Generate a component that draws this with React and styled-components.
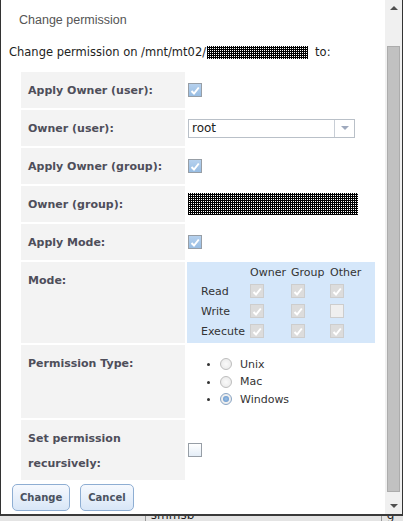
import React from 'react';
import styled, { createGlobalStyle } from 'styled-components';

const Global = createGlobalStyle`
  html, body {
    margin: 0;
    padding: 0;
    background: #e2e2e2;
  }
`;

const Screen = styled.div`
  width: 403px;
  height: 521px;
  display: flex;
  flex-direction: column;
  overflow: hidden;
`;

const Window = styled.div`
  height: 514px;
  flex-shrink: 0;
  display: flex;
  background: #fff;
  border-left: 1px solid #333;
  border-right: 1px solid #333;
  border-bottom: 2px solid #3a3a3a;
`;

const Content = styled.div`
  flex: 1;
  display: flex;
  flex-direction: column;
  padding-left: 8px;
`;

const Title = styled.div`
  font-family: 'Liberation Sans', Arial, sans-serif;
  font-size: 12.5px;
  color: #555;
  line-height: 14px;
  padding: 13px 0 0 10px;
`;

const Intro = styled.div`
  font-family: 'DejaVu Sans', Verdana, sans-serif;
  font-size: 11.5px;
  color: #222;
  line-height: 16px;
  margin-top: 17px;
  display: flex;
  align-items: center;
`;

const Redacted = styled.span`
  display: inline-block;
  width: ${(p) => p.w}px;
  height: ${(p) => p.h}px;
  background-color: #000;
  background-image: conic-gradient(#fff 0 25%, #000 0 100%);
  background-size: 2px 2px;
  margin: ${(p) => p.m || '0'};
`;

const Form = styled.div`
  display: grid;
  grid-template-columns: 164px 188px;
  gap: 2px;
  margin: 12px 0 0 12px;
`;

const Label = styled.div`
  background: #f3f3f3;
  font-family: 'DejaVu Sans', Verdana, sans-serif;
  font-weight: bold;
  font-size: 11px;
  color: #4e4e5a;
  line-height: 25px;
  padding: 6px 7px 4px;
`;

const Value = styled.div`
  display: flex;
  align-items: center;
  min-height: 36px;
  background: ${(p) => (p.blue ? '#d5e7fa' : 'transparent')};
`;

const Box = styled.span`
  width: 14px;
  height: 14px;
  box-sizing: border-box;
  display: inline-flex;
  align-items: center;
  justify-content: center;
  margin-left: ${(p) => (p.inset ? '1px' : '0')};
  border: 1px solid ${(p) => (p.disabled ? '#cdcdcd' : '#979ea6')};
  background: ${(p) =>
    p.disabled
      ? p.checked
        ? '#dcdcdc'
        : '#efefef'
      : p.checked
      ? 'linear-gradient(#b6d1ee, #98bde3)'
      : 'linear-gradient(#ffffff, #e4edf7)'};
`;

function Checkbox({ checked, disabled, inset }) {
  return (
    <Box checked={checked} disabled={disabled} inset={inset}>
      {checked && (
        <svg width="10" height="9" viewBox="0 0 10 9">
          <path d="M1.5 5 L4 7.5 L8.8 1.5" fill="none" stroke="#fff" strokeWidth="2" />
        </svg>
      )}
    </Box>
  );
}

const Select = styled.div`
  margin-left: 1px;
  width: 167px;
  height: 19px;
  box-sizing: border-box;
  display: flex;
  border: 1px solid #b9c0c8;
  background: #fff;
`;

const SelectText = styled.span`
  flex: 1;
  font-family: 'DejaVu Sans', Verdana, sans-serif;
  font-size: 12px;
  color: #222;
  line-height: 17px;
  padding-left: 3px;
`;

const SelectArrow = styled.span`
  width: 19px;
  border-left: 1px solid #c8ced6;
  display: flex;
  align-items: center;
  justify-content: center;
`;

const ModeGrid = styled.div`
  display: grid;
  grid-template-columns: 49px 41px 39px 36px;
  grid-template-rows: 18px 20px 20px 20px;
  align-items: center;
  padding: 1px 0 2px 14px;
  font-family: 'DejaVu Sans', Verdana, sans-serif;
  font-size: 11px;
  color: #333;
`;

const Head = styled.span`
  white-space: nowrap;
`;

const RadioList = styled.ul`
  margin: 10px 0 10px;
  padding-left: 33px;
  font-family: 'DejaVu Sans', Verdana, sans-serif;
  font-size: 11px;
  color: #333;
  list-style: disc;
`;

const RadioItem = styled.li`
  line-height: 17px;
  & > span {
    display: inline-flex;
    align-items: center;
    gap: 8px;
    vertical-align: middle;
  }
`;

const Radio = styled.span`
  width: 12px;
  height: 12px;
  box-sizing: border-box;
  border-radius: 50%;
  border: 1px solid ${(p) => (p.checked ? '#8aa5c4' : '#bdbdbd')};
  background: radial-gradient(circle, #fafafa 0, #e6e6e6 100%);
  display: inline-flex;
  align-items: center;
  justify-content: center;
  &::after {
    content: '';
    width: 6px;
    height: 6px;
    border-radius: 50%;
    background: ${(p) => (p.checked ? 'radial-gradient(circle, #9cc0e6, #5d8fc7)' : 'transparent')};
  }
`;

const Buttons = styled.div`
  display: flex;
  gap: 10px;
  margin: 4px 0 0 3px;
`;

const Button = styled.button`
  height: 27px;
  padding: 0 7px;
  border: 1px solid #8eaed3;
  border-radius: 5px;
  background: linear-gradient(#f6f9fe, #d8e6f7);
  font-family: 'DejaVu Sans', Verdana, sans-serif;
  font-weight: bold;
  font-size: 10px;
  color: #4a5260;
`;

const Scrollbar = styled.div`
  width: 17px;
  background: #f0f0f0;
  display: flex;
  flex-direction: column;
  align-items: center;
`;

const Arrow = styled.div`
  height: ${(p) => p.h}px;
  display: flex;
  align-items: ${(p) => (p.top ? 'flex-start' : 'center')};
  padding-top: ${(p) => (p.top ? '6px' : '0')};
  box-sizing: border-box;
  justify-content: center;
`;

const Thumb = styled.div`
  flex: 1;
  width: 13px;
  box-sizing: border-box;
  background: #c1c1c1;
  border: 1px solid #acacac;
  margin-bottom: 6px;
`;

const Behind = styled.div`
  flex: 1;
  display: flex;
  font-family: 'DejaVu Sans', Verdana, sans-serif;
  font-size: 12px;
  color: #222;
  background: #e4e4e4;
`;

const BehindCell = styled.div`
  width: ${(p) => p.w}px;
  border-left: ${(p) => (p.line ? '1px solid #999' : 'none')};
  padding-left: 5px;
  line-height: 8px;
  overflow: hidden;
  & > span {
    display: block;
    margin-top: -5px;
  }
`;

function App() {
  return (
    <Screen>
      <Global />
      <Window>
        <Content>
          <Title>Change permission</Title>
          <Intro>
            Change permission on /mnt/mt02/
            <Redacted w={101} h={13} m="0 7px 0 1px" />
            to:
          </Intro>
          <Form>
            <Label>Apply Owner (user):</Label>
            <Value>
              <Checkbox checked inset />
            </Value>

            <Label>Owner (user):</Label>
            <Value>
              <Select>
                <SelectText>root</SelectText>
                <SelectArrow>
                  <svg width="8" height="4" viewBox="0 0 8 4">
                    <path d="M0 0 L8 0 L4 4 Z" fill="#9ea9bd" />
                  </svg>
                </SelectArrow>
              </Select>
            </Value>

            <Label>Apply Owner (group):</Label>
            <Value>
              <Checkbox checked inset />
            </Value>

            <Label>Owner (group):</Label>
            <Value>
              <Redacted w={170} h={22} m="0 0 0 1px" />
            </Value>

            <Label>Apply Mode:</Label>
            <Value>
              <Checkbox checked inset />
            </Value>

            <Label>Mode:</Label>
            <Value blue>
              <ModeGrid>
                <span />
                <Head>Owner</Head>
                <Head>Group</Head>
                <Head>Other</Head>

                <span>Read</span>
                <Checkbox checked disabled />
                <Checkbox checked disabled />
                <Checkbox checked disabled />

                <span>Write</span>
                <Checkbox checked disabled />
                <Checkbox checked disabled />
                <Checkbox disabled />

                <span>Execute</span>
                <Checkbox checked disabled />
                <Checkbox checked disabled />
                <Checkbox checked disabled />
              </ModeGrid>
            </Value>

            <Label>Permission Type:</Label>
            <Value>
              <RadioList>
                <RadioItem>
                  <span>
                    <Radio />
                    Unix
                  </span>
                </RadioItem>
                <RadioItem>
                  <span>
                    <Radio />
                    Mac
                  </span>
                </RadioItem>
                <RadioItem>
                  <span>
                    <Radio checked />
                    Windows
                  </span>
                </RadioItem>
              </RadioList>
            </Value>

            <Label>
              Set permission
              <br />
              recursively:
            </Label>
            <Value>
              <Checkbox inset />
            </Value>
          </Form>
          <Buttons>
            <Button>Change</Button>
            <Button>Cancel</Button>
          </Buttons>
        </Content>
        <Scrollbar>
          <Arrow h={46} top>
            <svg width="8" height="4" viewBox="0 0 8 4">
              <path d="M0 4 L8 4 L4 0 Z" fill="#505050" />
            </svg>
          </Arrow>
          <Thumb />
          <Arrow h={16}>
            <svg width="8" height="4" viewBox="0 0 8 4">
              <path d="M0 0 L8 0 L4 4 Z" fill="#505050" />
            </svg>
          </Arrow>
        </Scrollbar>
      </Window>
      <Behind>
        <BehindCell w={146} />
        <BehindCell w={240} line>
          <span>smmsb</span>
        </BehindCell>
        <BehindCell w={17} line>
          <span>g</span>
        </BehindCell>
      </Behind>
    </Screen>
  );
}

export default App;
